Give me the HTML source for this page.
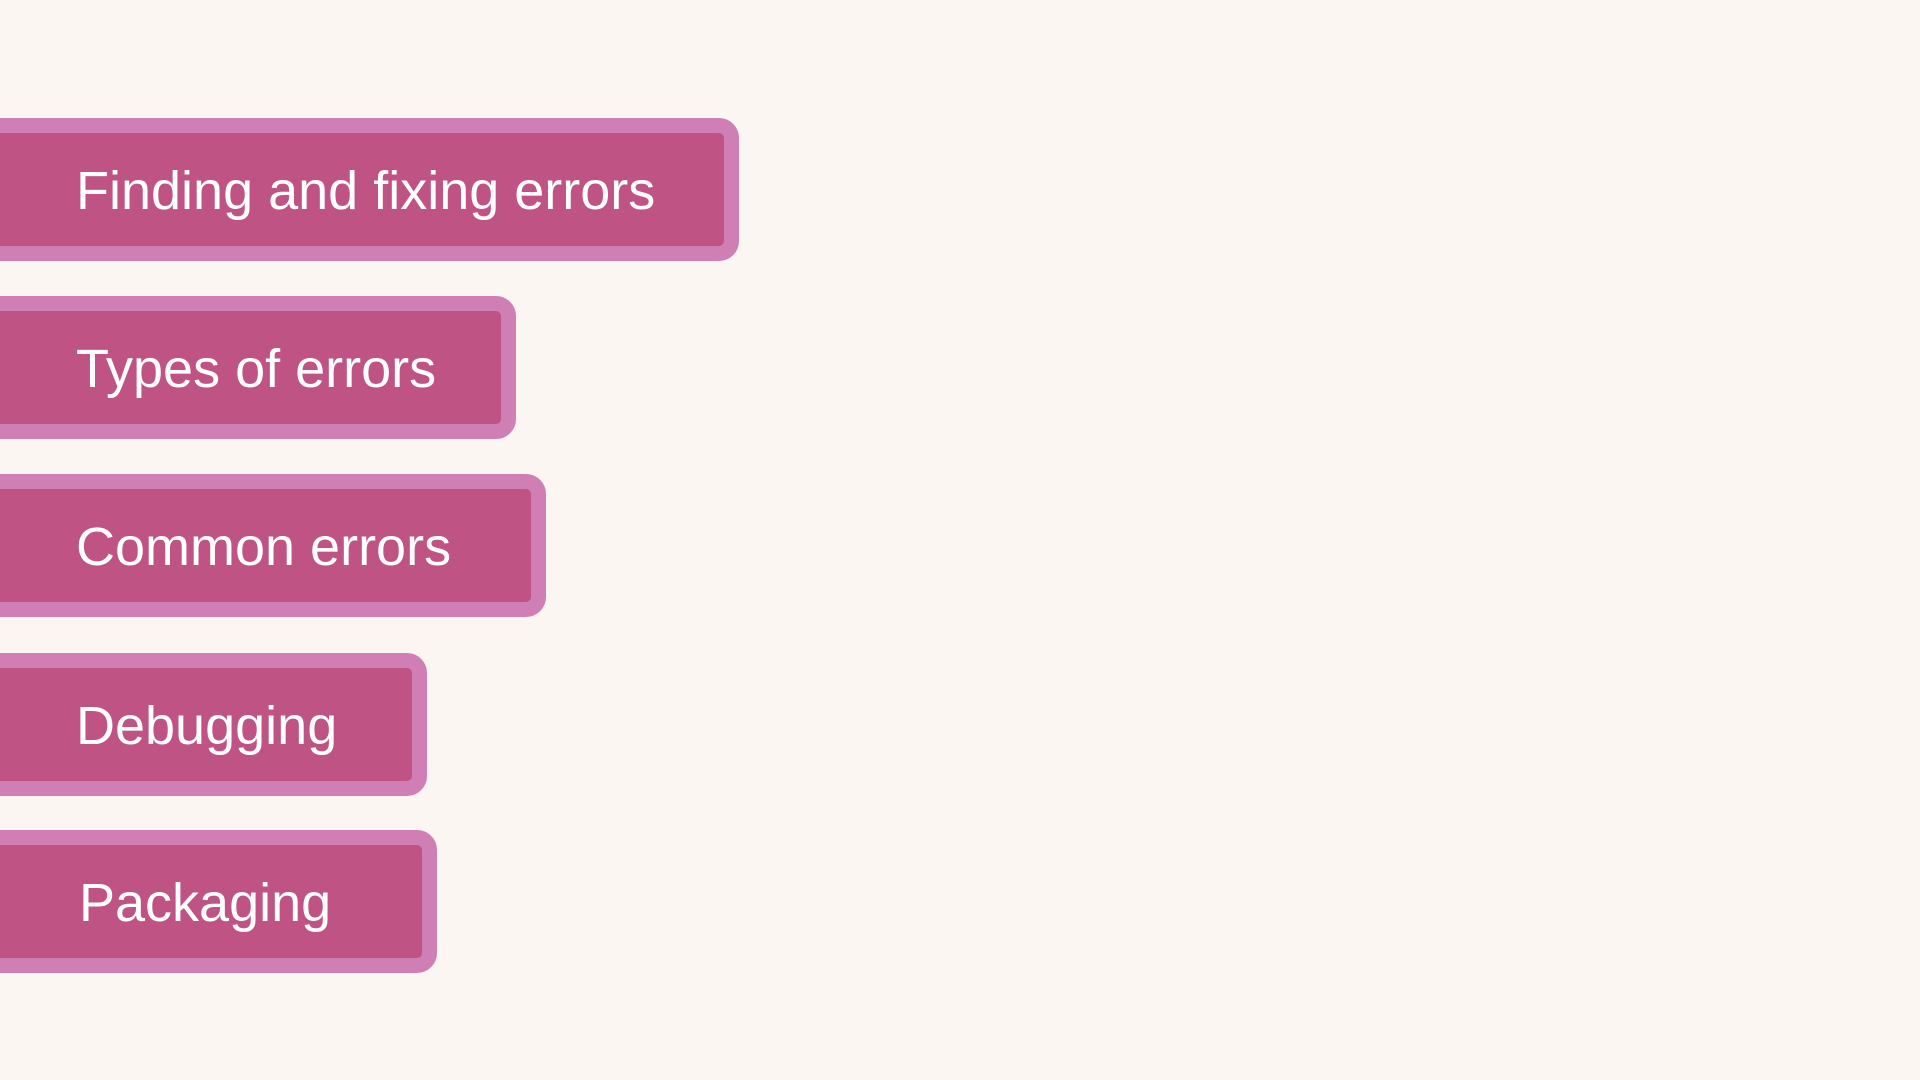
<!DOCTYPE html>
<html><head><meta charset="utf-8"><style>
html,body{margin:0;padding:0;width:1920px;height:1080px;background:#FCF6F3;overflow:hidden}
.b{position:absolute;left:-30px;height:113px;border:15px solid #D07FB5;background:#BF5384;border-radius:20px;box-sizing:content-box}
.t{position:absolute;left:91px;top:2px;line-height:112px;color:#fff;font-family:"Liberation Sans",sans-serif;font-size:54px;white-space:nowrap}
</style></head><body>
<div class="b" style="top:118px;width:739px"><span class="t">Finding and fixing errors</span></div>
<div class="b" style="top:296px;width:516px"><span class="t">Types of errors</span></div>
<div class="b" style="top:474px;width:546px"><span class="t">Common errors</span></div>
<div class="b" style="top:653px;width:427px"><span class="t">Debugging</span></div>
<div class="b" style="top:830px;width:437px"><span class="t" style="left:94px">Packaging</span></div>
</body></html>
